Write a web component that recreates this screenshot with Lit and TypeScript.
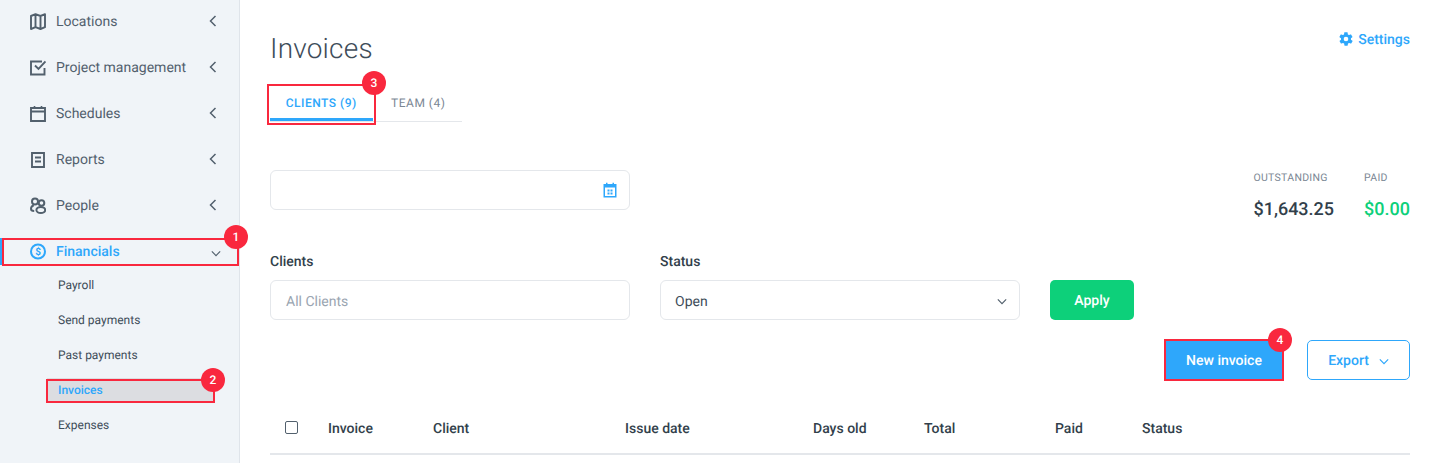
import { LitElement, html, css, svg } from "lit";
import { customElement } from "lit/decorators.js";

const chevL = svg`<path d="M6.500 1 1.500 6l5 5" fill="none" stroke="#52606d" stroke-width="1.500"/>`;
const icons: Record<string, any> = {
  map: svg`<path d="M1 3 5.500 1.200l5 1.800L15 1.200v13l-4.500 1.800-5-1.800L1 16z M5.500 1.200v13 M10.500 3v13" fill="none" stroke="#52606d" stroke-width="1.900" stroke-linejoin="round"/>`,
  check: svg`<path d="M14.500 9v6.500H1v-13h11" fill="none" stroke="#52606d" stroke-width="1.900"/><path d="M5 6.500 8.500 10l7-7.500" fill="none" stroke="#52606d" stroke-width="1.900"/>`,
  cal: svg`<path d="M1 3h14v13H1z M1 6.500h14" fill="none" stroke="#52606d" stroke-width="1.900"/><path d="M4.500 1v3M11.500 1v3" stroke="#52606d" stroke-width="1.600"/>`,
  report: svg`<path d="M2 2h12v14H2z" fill="none" stroke="#52606d" stroke-width="1.900"/><path d="M5 6.500h6M5 10.500h6" stroke="#52606d" stroke-width="1.800"/>`,
  people: svg`<g fill="none" stroke="#52606d" stroke-width="2"><circle cx="5" cy="4.400" r="3"/><circle cx="11.500" cy="6" r="2.800"/><path d="M3.800 8.200C1.800 8.800 1 10.200 1 11.800c0 1.500 1.400 2.200 3.200 2.200"/><ellipse cx="10.800" cy="13" rx="4.400" ry="3"/></g>`,
  dollar: svg`<circle cx="8" cy="8.500" r="7" fill="none" stroke="#2ea7fb" stroke-width="2"/><text x="8" y="12" font-size="10" font-weight="700" font-family="Roboto" text-anchor="middle" fill="#2ea7fb">$</text>`,
};

@customElement("app-root")
export class AppRoot extends LitElement {
  static styles = css`
    :host { display: block; width: 1434px; height: 463px; overflow: hidden; background: #fff; font-family: Roboto, sans-serif; color: #323f4b; text-rendering: geometricPrecision; }
    .page { display: flex; height: 463px; position: relative; }
    .side { width: 239px; flex: none; background: #f0f4f8; border-right: 1px solid #dfe4ea; box-sizing: content-box; position: relative; }
    .row { height: 46px; display: flex; align-items: center; padding-left: 30px; padding-right: 22px; font-size: 14px; color: #52606d; }
    .row svg.ic { width: 16px; height: 17px; margin-right: 10px; flex: none; }
    .row span { flex: 1; margin-top: 2px; }
    .row svg.ch { width: 8px; height: 12px; flex: none; }
    .row.active { color: #2ea7fb; font-weight: 500; position: relative; }
    .row.active::before { content: ""; position: absolute; left: 0; top: 10px; width: 2px; height: 27px; background: #2ea7fb; }
    .row.active svg.dn { width: 10px; height: 7px; flex: none; margin-right: -4px; margin-top: 4px; }
    .nav { margin-top: -2px; }
    .subs { margin-top: -7px; }
    .sub { height: 35px; display: flex; align-items: center; margin-left: 47px; width: 167px; padding-left: 11px; box-sizing: border-box; font-size: 12px; color: #3e4c59; position: relative; }
    .sub.on { color: #2ea7fb; font-weight: 500; }
    .sub.on::before { content: ""; position: absolute; left: 0; right: 0; top: 6px; height: 23px; background: #dcdde1; z-index: 0; }
    .sub b { font-weight: inherit; position: relative; }
    .main { flex: 1; padding: 0 24px 0 30px; min-width: 0; }
    .top { display: flex; justify-content: space-between; padding-top: 31px; height: 39px; }
    h1 { margin: 0; font-size: 28px; font-weight: 300; line-height: 36px; color: #3e4c59; letter-spacing: .2px; }
    .settings { display: flex; align-items: center; height: 17px; color: #2ea7fb; font-size: 14px; font-weight: 500; gap: 4px; }
    .settings svg { width: 16px; height: 16px; margin-top: -2px; }
    .tabs { display: flex; width: 192px; margin-top: 15px; height: 36px; border-bottom: 1px solid #e4e7eb; font-size: 12px; letter-spacing: .5px; font-weight: 500; }
    .tab { display: flex; align-items: center; justify-content: center; height: 35px; }
    .tab.on { width: 104px; padding: 2px 1px 0 0; color: #2ea7fb; border-bottom: 3px solid #2ea7fb; height: 36px; box-sizing: border-box; }
    .tab.off { width: 88px; color: #7b8794; font-weight: 400; margin-left: 1px; }
    .range { display: flex; justify-content: space-between; align-items: flex-start; margin-top: 48px; }
    .field { width: 360px; height: 40px; box-sizing: border-box; border: 1px solid #e4e7eb; border-radius: 6px; display: flex; align-items: center; font-size: 14px; background: #fff; padding-top: 3px; }
    .date { justify-content: flex-end; padding-right: 11px; padding-top: 0; }
    .date svg { width: 16px; height: 16px; }
    .stats { display: flex; gap: 30px; padding-top: 1px; }
    .stat { display: flex; flex-direction: column; }
    .stat small { font-size: 10.500px; letter-spacing: .3px; color: #7b8794; line-height: 14px; }
    .stat strong { font-size: 18px; font-weight: 500; line-height: 24px; margin-top: 13px; color: #323f4b; }
    .stat strong.g { color: #0dd07a; }
    .filters { display: flex; align-items: flex-end; gap: 30px; margin-top: 29px; }
    label { display: block; font-size: 14px; font-weight: 500; line-height: 20px; padding-top: 1px; margin-bottom: 8px; color: #323f4b; }
    .ph { color: #9aa5b1; padding-left: 15px; }
    .sel { padding: 1px 14px 0; justify-content: space-between; color: #3e4c59; }
    .sel .t { margin-top: 2px; }
    .sel svg { width: 10px; height: 7px; margin-right: -2px; margin-top: 1px; }
    .btn { height: 40px; box-sizing: border-box; display: flex; align-items: center; justify-content: center; border-radius: 5px; font-size: 14px; font-weight: 500; color: #fff; padding-top: 2px; }
    .apply { width: 84px; background: #0dd07a; }
    .acts { display: flex; justify-content: flex-end; gap: 24px; margin-top: 20px; }
    .new { width: 118px; background: #2ea7fb; border-radius: 0; }
    .exp { width: 103px; background: #fff; color: #2ea7fb; border: 1px solid #2ea7fb; gap: 10px; }
    .exp svg { width: 10px; height: 7px; }
    .thead { display: grid; grid-template-columns: 58px 105px 192px 188px 111px 131px 87px 1fr; margin-top: 24px; height: 49px; border-bottom: 2px solid #e4e7eb; box-sizing: content-box; align-items: center; font-size: 14px; font-weight: 500; color: #323f4b; }
    .cb { width: 13px; height: 13px; border: 1px solid #52606d; border-radius: 2px; box-sizing: border-box; margin-left: 15px; margin-top: -3px; background: #fff; }
    .box { position: absolute; border: 2px solid #f9283e; box-sizing: border-box; }
    .badge { position: absolute; width: 24px; height: 24px; border-radius: 50%; background: #f9283e; color: #fff; font-size: 12px; font-weight: 500; display: flex; align-items: center; justify-content: center; }
  `;

  private navRow(label: string, icon: string) {
    return html`<div class="row"><svg class="ic" viewBox="0 0 16 17">${icons[icon]}</svg><span>${label}</span><svg class="ch" viewBox="0 0 8 12">${chevL}</svg></div>`;
  }

  render() {
    const down = (c: string) => svg`<path d="M1 1.500 6 6.500l5-5" fill="none" stroke="${c}" stroke-width="1.400"/>`;
    return html`<div class="page">
      <aside class="side">
        <div class="nav">
          ${this.navRow("Locations", "map")}
          ${this.navRow("Project management", "check")}
          ${this.navRow("Schedules", "cal")}
          ${this.navRow("Reports", "report")}
          ${this.navRow("People", "people")}
          <div class="row active"><svg class="ic" viewBox="0 0 16 17">${icons.dollar}</svg><span>Financials</span><svg class="dn" viewBox="0 0 12 8">${down("#52606d")}</svg></div>
        </div>
        <div class="subs">
          <div class="sub"><b>Payroll</b></div>
          <div class="sub"><b>Send payments</b></div>
          <div class="sub"><b>Past payments</b></div>
          <div class="sub on"><b>Invoices</b></div>
          <div class="sub"><b>Expenses</b></div>
        </div>
      </aside>
      <main class="main">
        <div class="top">
          <h1>Invoices</h1>
          <div class="settings"><svg viewBox="0 0 24 24"><path fill="#2ea7fb" fill-rule="evenodd" d="M19.400 13c.1-.3.1-.7.1-1s0-.7-.1-1l2.100-1.600c.2-.2.2-.4.100-.6l-2-3.500c-.1-.2-.4-.3-.6-.2l-2.500 1c-.5-.4-1.100-.7-1.700-1l-.4-2.600c0-.3-.2-.5-.5-.5h-4c-.3 0-.5.200-.5.500l-.4 2.600c-.6.300-1.200.6-1.700 1l-2.500-1c-.2-.1-.5 0-.6.200l-2 3.500c-.1.200-.1.500.1.600L4.600 11c-.1.300-.1.700-.1 1s0 .7.1 1l-2.100 1.600c-.2.200-.2.400-.1.600l2 3.500c.1.200.4.300.6.200l2.500-1c.5.400 1.100.7 1.700 1l.4 2.600c0 .3.200.5.500.5h4c.3 0 .5-.2.500-.5l.4-2.600c.6-.3 1.200-.6 1.700-1l2.500 1c.2.100.5 0 .6-.2l2-3.500c.1-.2.100-.5-.1-.6zM12 15.500a3.500 3.500 0 1 1 0-7 3.500 3.500 0 0 1 0 7z"/></svg>Settings</div>
        </div>
        <div class="tabs"><div class="tab on">CLIENTS (9)</div><div class="tab off">TEAM (4)</div></div>
        <div class="range">
          <div class="field date"><svg viewBox="0 0 16 16"><path fill="#2ea7fb" fill-rule="evenodd" d="M1.500 2H4V.8h1.500V2h5V.8H12V2h2.500v13.500h-13zM3 5.500v8.500h10V5.500zM5.500 7.500h2v2h-2zM8.500 7.500h2v2h-2zM5.500 10.500h2v2h-2zM8.500 10.500h2v2h-2z"/></svg></div>
          <div class="stats">
            <div class="stat"><small>OUTSTANDING</small><strong>$1,643.25</strong></div>
            <div class="stat"><small>PAID</small><strong class="g">$0.00</strong></div>
          </div>
        </div>
        <div class="filters">
          <div><label>Clients</label><div class="field ph">All Clients</div></div>
          <div><label>Status</label><div class="field sel"><span class="t">Open</span><svg viewBox="0 0 12 8">${down("#52606d")}</svg></div></div>
          <div class="btn apply">Apply</div>
        </div>
        <div class="acts">
          <div class="btn new">New invoice</div>
          <div class="btn exp">Export<svg viewBox="0 0 12 8">${down("#2ea7fb")}</svg></div>
        </div>
        <div class="thead">
          <div><div class="cb"></div></div>
          <div>Invoice</div><div>Client</div><div>Issue date</div><div>Days old</div><div>Total</div><div>Paid</div><div>Status</div>
        </div>
      </main>
      <div class="box" style="left:2px;top:238px;width:237px;height:28px"></div>
      <div class="badge" style="left:224px;top:225px">1</div>
      <div class="box" style="left:46px;top:379px;width:169px;height:24px"></div>
      <div class="badge" style="left:201px;top:368px">2</div>
      <div class="box" style="left:267px;top:84px;width:109px;height:41px"></div>
      <div class="badge" style="left:362px;top:71px">3</div>
      <div class="box" style="left:1164px;top:339px;width:120px;height:42px"></div>
      <div class="badge" style="left:1268px;top:328px">4</div>
    </div>`;
  }
}
